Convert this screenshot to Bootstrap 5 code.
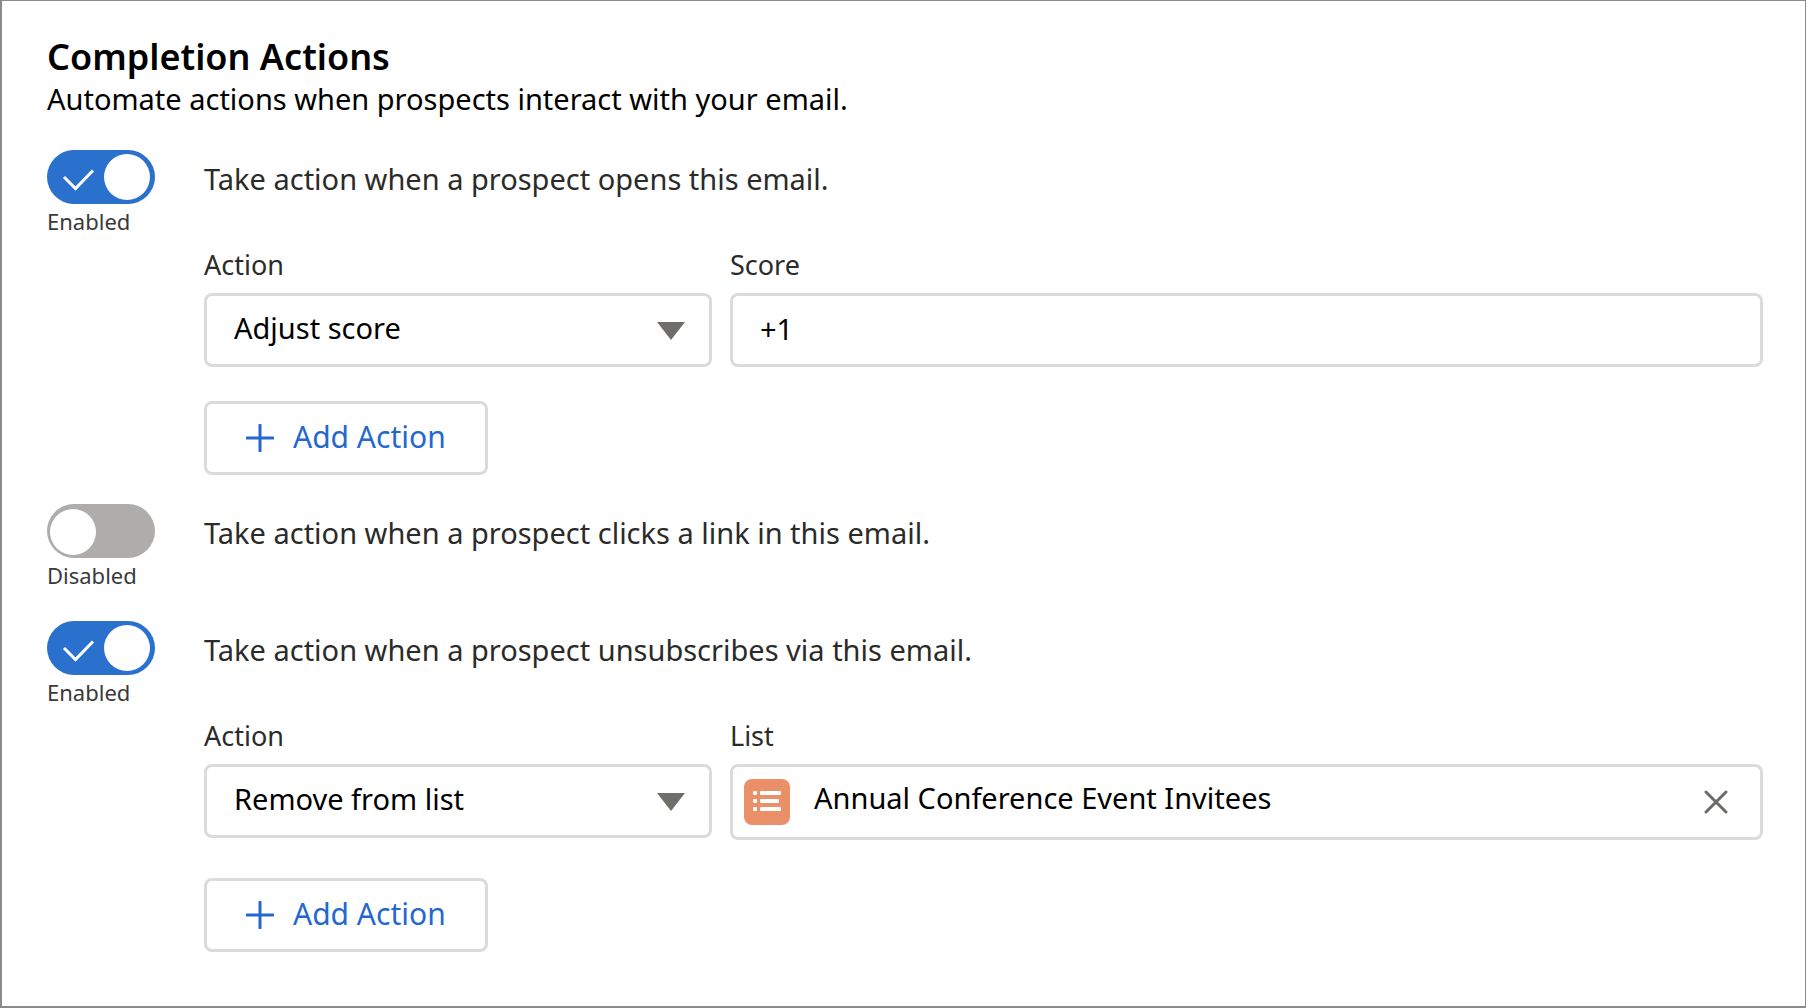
<!DOCTYPE html>
<html lang="en">
<head>
<meta charset="utf-8">
<meta name="viewport" content="width=device-width, initial-scale=1">
<title>Completion Actions</title>
<link href="https://cdn.jsdelivr.net/npm/bootstrap@5.3.0/dist/css/bootstrap.min.css" rel="stylesheet">
<style>
  body { font-family: "Noto Sans", "Open Sans", sans-serif; font-size: 29px; color: #000; background: #fff; }
  .panel { border: solid #8a8a8a; border-width: 1px 1px 2px 2px; padding: 35px 42px 40px 45px; }
  .panel-title { font-size: 36px; line-height: 42px; font-weight: 600; }
  .panel-sub { line-height: 42px; margin-bottom: 30px; }
  .rules { display: flex; flex-direction: column; gap: 29px; }
  .toggle-col { width: 157px; flex: none; }
  .toggle-col .form-check-input {
    display: block; float: none; width: 108px; height: 54px; margin: 0; border: 0; border-radius: 27px;
    background-color: #aeadab; background-size: 108px 54px; background-position: 0 0;
    background-image: url("data:image/svg+xml,%3csvg xmlns='http://www.w3.org/2000/svg' viewBox='0 0 108 54'%3e%3ccircle cx='26' cy='28' r='23' fill='%23fff'/%3e%3c/svg%3e");
  }
  .toggle-col .form-check-input:checked {
    background-color: #2a70cd; background-position: 0 0;
    background-image: url("data:image/svg+xml,%3csvg xmlns='http://www.w3.org/2000/svg' viewBox='0 0 108 54'%3e%3ccircle cx='80' cy='27' r='23' fill='%23fff'/%3e%3cpath d='M17 27L28.500 38.500L46 20.500' fill='none' stroke='%23fff' stroke-width='3'/%3e%3c/svg%3e");
  }
  .state { font-size: 22px; line-height: 34px; color: #3a3a38; }
  .rule-text { line-height: 58px; color: #2b2b29; display: block; }
  .fields { display: grid; grid-template-columns: 508px 1fr; gap: 0 18px; margin-top: 37px; align-items: start; }
  .fields .form-label { font-size: 27px; line-height: 40px; margin-bottom: 8px; color: #2b2b29; display: block; }
  .fields .form-select, .fields .form-control, .btn-add, .lookup {
    border: 3px solid #dddbda; border-radius: 8px; background-color: #fff; height: 74px; font-size: 29px; line-height: 40px; color: #000;
  }
  .fields .form-select {
    padding: 12px 60px 16px 27px; background-size: 28px 18px; background-position: right 24px top 26px;
    background-image: url("data:image/svg+xml,%3csvg xmlns='http://www.w3.org/2000/svg' viewBox='0 0 28 18'%3e%3cpath d='M0 0H28L14 18Z' fill='%23706e6b'/%3e%3c/svg%3e");
  }
  .fields .form-control { padding: 12px 27px 16px; }
  .lookup { display: flex; align-items: center; height: 76px; padding: 0 32px 0 11px; }
  .lookup .form-control { border: 0; height: 70px; padding: 10px 24px 20px; box-shadow: none; }
  .btn-clear { border: 0; padding: 0; background: none; display: flex; }
  .btn-add { display: inline-flex; align-items: center; gap: 19px; min-width: 282px; padding: 0 39px; margin-top: 34px; color: #2468cf; }
  .btn-add span { font-size: 30px; padding-bottom: 2px; }
  .wide-gap { margin-top: 38px; }
</style>
</head>
<body>
<main class="panel min-vh-100">
  <h1 class="panel-title mb-0">Completion Actions</h1>
  <p class="panel-sub">Automate actions when prospects interact with your email.</p>

  <div class="rules">
    <section class="d-flex">
      <div class="toggle-col">
        <input class="form-check-input" type="checkbox" role="switch" id="onOpen" checked>
        <div class="state">Enabled</div>
      </div>
      <div class="flex-grow-1">
        <label class="rule-text" for="onOpen">Take action when a prospect opens this email.</label>
        <div class="fields">
          <div>
            <label class="form-label" for="openAction">Action</label>
            <select class="form-select" id="openAction"><option>Adjust score</option></select>
          </div>
          <div>
            <label class="form-label" for="score">Score</label>
            <input class="form-control" id="score" type="text" value="+1">
          </div>
        </div>
        <button type="button" class="btn btn-add">
          <svg width="28" height="28" viewBox="0 0 28 28" aria-hidden="true"><path d="M14 1V27M1 14H27" stroke="currentColor" stroke-width="3" stroke-linecap="round"/></svg>
          <span>Add Action</span>
        </button>
      </div>
    </section>

    <section class="d-flex">
      <div class="toggle-col">
        <input class="form-check-input" type="checkbox" role="switch" id="onClick">
        <div class="state">Disabled</div>
      </div>
      <div class="flex-grow-1">
        <label class="rule-text" for="onClick">Take action when a prospect clicks a link in this email.</label>
      </div>
    </section>

    <section class="d-flex">
      <div class="toggle-col">
        <input class="form-check-input" type="checkbox" role="switch" id="onUnsub" checked>
        <div class="state">Enabled</div>
      </div>
      <div class="flex-grow-1">
        <label class="rule-text" for="onUnsub">Take action when a prospect unsubscribes via this email.</label>
        <div class="fields">
          <div>
            <label class="form-label" for="unsubAction">Action</label>
            <select class="form-select" id="unsubAction"><option>Remove from list</option></select>
          </div>
          <div>
            <label class="form-label" for="listName">List</label>
            <div class="lookup">
              <svg class="flex-shrink-0" width="46" height="46" viewBox="0 0 46 46" aria-hidden="true">
                <rect width="46" height="46" rx="8" fill="#eb8f69"/>
                <g fill="#fff"><rect x="9" y="12" width="4" height="4" rx="1"/><rect x="9" y="20" width="4" height="4" rx="1"/><rect x="9" y="28" width="4" height="4" rx="1"/><rect x="16" y="12" width="21" height="4" rx="1"/><rect x="16" y="20" width="19" height="4" rx="1"/><rect x="16" y="28" width="21" height="4" rx="1"/></g>
              </svg>
              <input class="form-control" id="listName" type="text" value="Annual Conference Event Invitees">
              <button type="button" class="btn-clear" aria-label="Clear list">
                <svg width="24" height="24" viewBox="0 0 24 24" aria-hidden="true"><path d="M2 2L22 22M22 2L2 22" stroke="#6b6a67" stroke-width="3" stroke-linecap="round"/></svg>
              </button>
            </div>
          </div>
        </div>
        <button type="button" class="btn btn-add wide-gap">
          <svg width="28" height="28" viewBox="0 0 28 28" aria-hidden="true"><path d="M14 1V27M1 14H27" stroke="currentColor" stroke-width="3" stroke-linecap="round"/></svg>
          <span>Add Action</span>
        </button>
      </div>
    </section>
  </div>
</main>
<script src="https://cdn.jsdelivr.net/npm/bootstrap@5.3.0/dist/js/bootstrap.bundle.min.js"></script>
</body>
</html>
